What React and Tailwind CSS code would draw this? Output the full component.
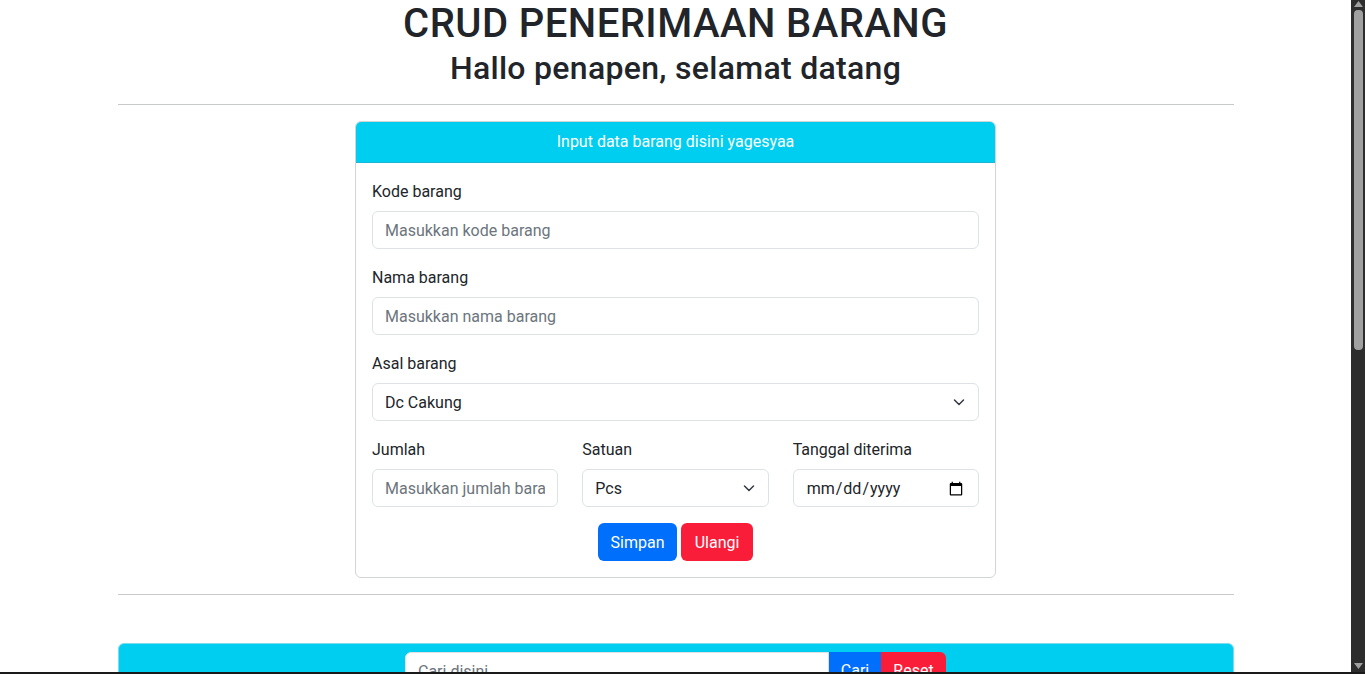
function Chevron() {
  return (
    <svg width="16" height="16" viewBox="0 0 16 16" className="pointer-events-none absolute right-3 top-1/2 -translate-y-1/2">
      <path d="M3.5 6l4.5 4.5 4.5-4.5" fill="none" stroke="#343a40" strokeWidth="1.5" strokeLinecap="round" strokeLinejoin="round" />
    </svg>
  );
}

function Label({ children }) {
  return <label className="mb-[7px] block pt-px text-[16px] leading-6 text-[#212529]">{children}</label>;
}

const inputCls =
  "block h-[38px] w-full rounded-[6px] border border-[#dee2e6] bg-white px-3 pt-px text-[16px] leading-6 text-[#212529] placeholder:text-[#6c757d] outline-none";

function Select({ value }) {
  return (
    <div className="relative">
      <select defaultValue={value} className={inputCls + " appearance-none pr-9"}>
        <option>{value}</option>
      </select>
      <Chevron />
    </div>
  );
}

export default function App() {
  return (
    <div className="flex h-[674px] flex-col overflow-hidden bg-white" style={{ fontFamily: "Roboto, sans-serif" }}>
      <div className="flex min-h-0 flex-1">
        <div className="min-w-0 flex-1 overflow-hidden">
          <div className="mx-auto w-[1140px] px-3 text-[#212529]">
            <h1 className="whitespace-nowrap text-center text-[40px] font-medium leading-[48px] tracking-[0.45px]">
              CRUD PENERIMAAN BARANG
            </h1>
            <h2 className="whitespace-nowrap text-center text-[32px] font-medium leading-[40px] tracking-[0.3px]">
              Hallo penapen, selamat datang
            </h2>
            <hr className="my-4 border-t border-[#c8c9ca]" />

            <div className="mx-auto w-[641px] overflow-hidden rounded-[6px] border border-[#d3d4d5]">
              <div className="border-b border-[#1ab8d6] bg-[#00cef1] px-4 py-2 text-center text-[16px] leading-6 text-white">
                Input data barang disini yagesyaa
              </div>
              <div className="p-4">
                <div className="mb-4">
                  <Label>Kode barang</Label>
                  <input className={inputCls} placeholder="Masukkan kode barang" />
                </div>
                <div className="mb-4">
                  <Label>Nama barang</Label>
                  <input className={inputCls} placeholder="Masukkan nama barang" />
                </div>
                <div className="mb-4">
                  <Label>Asal barang</Label>
                  <Select value="Dc Cakung" />
                </div>
                <div className="grid grid-cols-3 gap-6">
                  <div>
                    <Label>Jumlah</Label>
                    <input className={inputCls} placeholder="Masukkan jumlah barang" />
                  </div>
                  <div>
                    <Label>Satuan</Label>
                    <Select value="Pcs" />
                  </div>
                  <div>
                    <Label>Tanggal diterima</Label>
                    <input type="date" className={inputCls} />
                  </div>
                </div>
                <div className="mt-4 flex justify-center gap-1">
                  <button className="h-[38px] w-[79px] rounded-[6px] bg-[#006ffc] pt-px text-[16px] leading-6 text-white">Simpan</button>
                  <button className="h-[38px] w-[72px] rounded-[6px] bg-[#f91d3a] pt-px text-[16px] leading-6 text-white">Ulangi</button>
                </div>
              </div>
            </div>

            <hr className="mb-12 mt-4 border-t border-[#c8c9ca]" />

            <div className="rounded-[6px] border border-[#7fdbeb] bg-[#00cef1] px-2 pt-2 pb-2">
              <div className="mx-auto flex w-[541px]">
                <input
                  className="h-[38px] flex-1 rounded-l-[6px] border border-[#dee2e6] bg-white px-3 text-[16px] text-[#212529] placeholder:text-[#6c757d] outline-none"
                  placeholder="Cari disini"
                />
                <button className="h-[38px] w-[52px] bg-[#006ffc] text-[16px] text-white">Cari</button>
                <button className="h-[38px] w-[65px] rounded-r-[6px] bg-[#f91d3a] text-[16px] text-white">Reset</button>
              </div>
              <div className="h-[60px]" />
            </div>
          </div>
        </div>
        <div className="flex w-[14px] flex-col items-center bg-[#2d2d2d]">
          <svg width="9" height="6" viewBox="0 0 9 6" className="mt-[1px]">
            <path d="M4.5 0L9 6H0z" fill="#a0a0a0" />
          </svg>
          <div className="mt-[3px] h-[340px] w-[9px] rounded-[4px] bg-[#a0a0a0]" />
          <div className="flex-1" />
          <svg width="9" height="6" viewBox="0 0 9 6" className="mb-[3px]">
            <path d="M0 0h9L4.5 6z" fill="#a0a0a0" />
          </svg>
        </div>
      </div>
      <div className="h-[2px] bg-[#1a1a1a]" />
    </div>
  );
}
